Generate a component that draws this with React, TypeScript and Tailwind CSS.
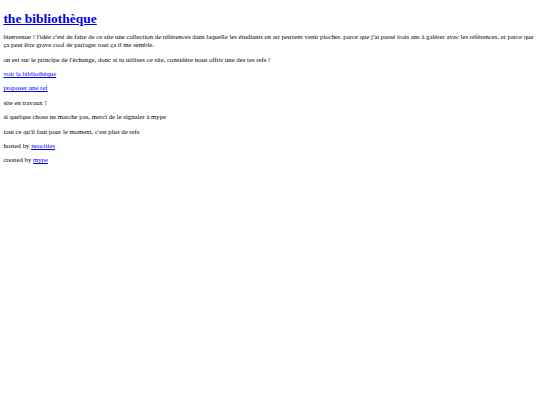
export default function App() {
  const p = "my-[6.4px] text-[6.75px] leading-[8px]";
  const a = "text-[#0000ee] underline";
  return (
    <div className="min-h-[405px] bg-white p-[3.375px] text-black font-['Liberation_Serif',serif]">
      <h1 className="mt-[7.5px] mb-[6.9px] text-[13.5px] font-bold leading-[15.5px]">
        <a href="#" className={a}>the bibliothèque</a>
      </h1>
      <p className={p}>
        bienvenue ! l'idée c'est de faire de ce site une collection de références dans laquelle les étudiants en art peuvent venir piocher. parce que j'ai passé trois ans à galérer avec les références. et parce que ça peut être grave cool de partager tout ça il me semble.
      </p>
      <p className={p}>
        on est sur le principe de l'échange, donc si tu utilises ce site, considère nous offrir une des tes refs !
      </p>
      <p className={p}>
        <a href="#" className={a}>voir la bibliothèque</a>
      </p>
      <p className={p}>
        <a href="#" className={a}>proposer une ref</a>
      </p>
      <p className={p}>site en travaux !</p>
      <p className={p}>si quelque chose ne marche pas, merci de le signaler à mype</p>
      <p className={p}>tout ce qu'il faut pour le moment, c'est plus de refs</p>
      <p className={p}>
        hosted by <a href="#" className={a}>neocities</a>
      </p>
      <p className={p}>
        created by <a href="#" className={a}>mype</a>
      </p>
    </div>
  );
}
